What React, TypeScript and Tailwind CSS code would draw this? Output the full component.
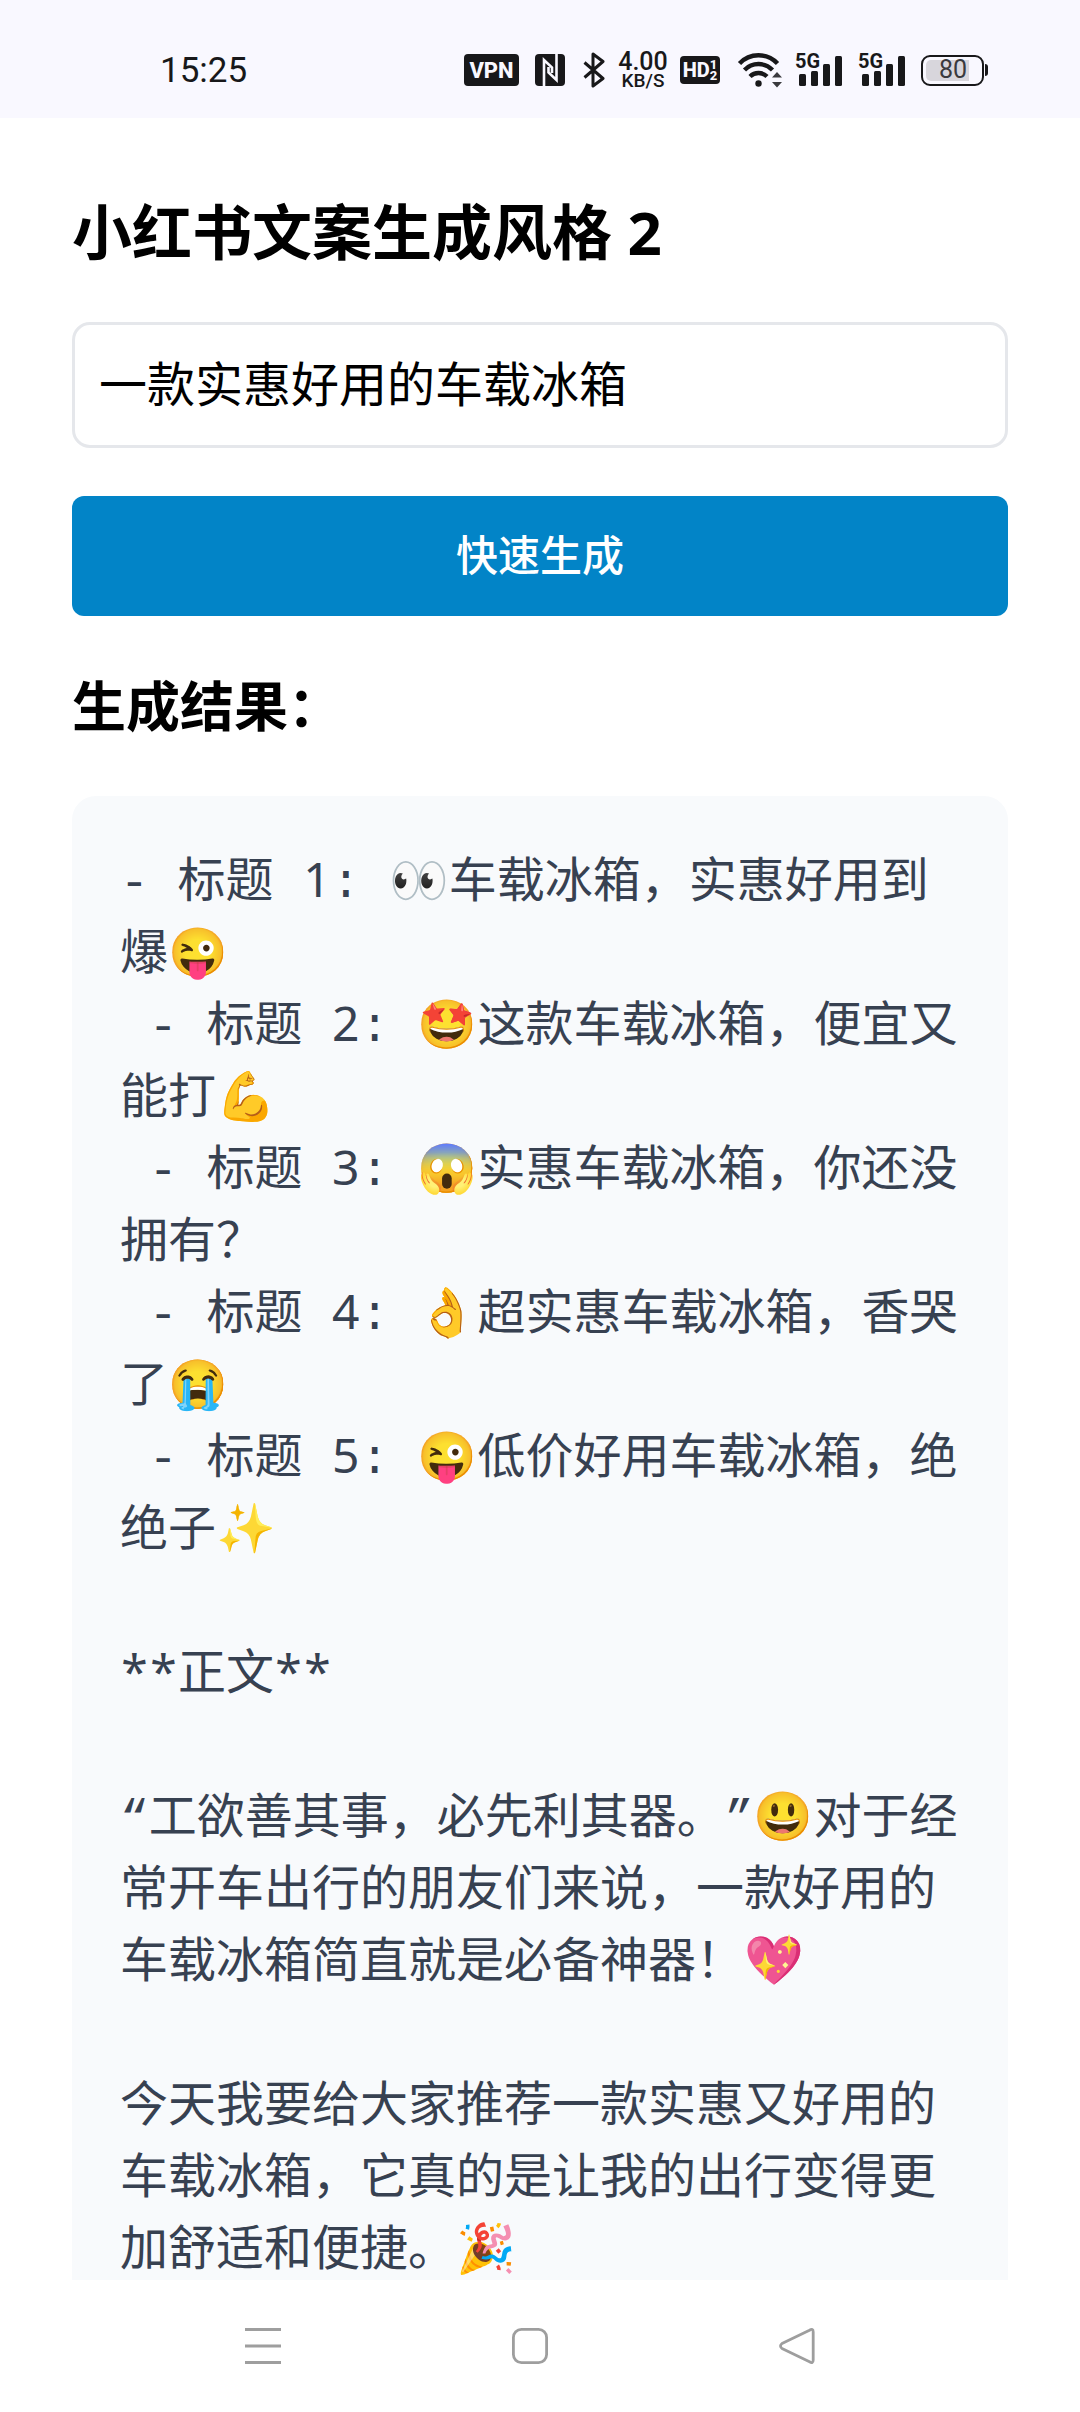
import { useState } from "react";
import type { ReactNode } from "react";

const titles = [
  "👀车载冰箱，实惠好用到爆😜",
  "🤩这款车载冰箱，便宜又能打💪",
  "😱实惠车载冰箱，你还没拥有？",
  "👌超实惠车载冰箱，香哭了😭",
  "😜低价好用车载冰箱，绝绝子✨",
];

/* One monospace cell drawn with a humanist sans glyph. */
function Cell({ children }: { children: ReactNode }) {
  return (
    <span className="inline-block w-[29px] text-center font-['Noto_Sans','Open_Sans',sans-serif] leading-none">
      {children}
    </span>
  );
}

function VpnBadge() {
  return (
    <span className="flex h-8 w-[55px] items-center justify-center rounded bg-[#18181a] font-['Roboto',sans-serif] text-[22px] font-extrabold text-[#f9f8ff]">
      VPN
    </span>
  );
}

function NfcIcon() {
  return (
    <svg className="h-8 w-[30px]" viewBox="0 0 30 32" aria-label="NFC">
      <rect width="30" height="32" rx="4" fill="#18181a" />
      <path d="M9 32V6L17 13.500V19" fill="none" stroke="#f9f8ff" strokeWidth="2.600" />
      <path d="M21.500 0V26L13.500 18.500V13" fill="none" stroke="#f9f8ff" strokeWidth="2.600" />
    </svg>
  );
}

function BluetoothIcon() {
  return (
    <svg className="h-9 w-[22px]" viewBox="0 0 22 36" fill="none" stroke="#18181a" strokeWidth="3" strokeLinejoin="round" aria-label="Bluetooth">
      <path d="M1.500 10.500L20 26.500L10 34V2L20 9.500L1.500 25.500" />
    </svg>
  );
}

function NetSpeed() {
  return (
    <span className="flex w-[54px] flex-col items-center font-['Roboto',sans-serif] font-medium text-[#18181a]">
      <span className="text-[25px] leading-[20px]">4.00</span>
      <span className="text-[19px] leading-[17px]">KB/S</span>
    </span>
  );
}

function HdBadge() {
  return (
    <span className="flex h-7 w-10 items-center justify-center rounded bg-[#18181a] font-['Roboto',sans-serif] font-extrabold text-[#f9f8ff]">
      <span className="text-[20px] leading-7">HD</span>
      <span className="flex flex-col text-[13px] leading-[11px]">
        <span>1</span>
        <span>2</span>
      </span>
    </span>
  );
}

function WifiIcon() {
  return (
    <svg className="h-9 w-[46px]" viewBox="0 0 46 36" fill="none" stroke="#18181a" strokeWidth="4.400" aria-label="Wi-Fi">
      <path d="M2.500 11.500A26 26 0 0 1 40.500 11.500" />
      <path d="M7.500 18A19.500 19.500 0 0 1 35.500 18" />
      <path d="M13 24.500A12 12 0 0 1 30 24.500" />
      <circle cx="21.500" cy="31.500" r="3.200" fill="#18181a" stroke="none" />
      <path d="M35 25.500h10l-5-5.500zM35 30h10l-5 5.500z" fill="#3a3a3e" stroke="none" />
    </svg>
  );
}

function SignalIcon() {
  return (
    <span className="relative block h-8 w-[46px]">
      <svg className="h-8 w-[46px]" viewBox="0 0 46 32" fill="#18181a" aria-label="5G signal">
        <rect x="3" y="20" width="7" height="12" rx="1.500" />
        <rect x="15" y="17" width="7" height="15" rx="1.500" />
        <rect x="27" y="10" width="7" height="22" rx="1.500" />
        <rect x="39" y="2" width="7" height="30" rx="1.500" />
      </svg>
      <span className="absolute -top-0.5 -left-px font-['Roboto',sans-serif] text-[20px] leading-[18px] font-bold text-[#18181a]">
        5G
      </span>
    </span>
  );
}

function Battery() {
  return (
    <span className="flex items-center gap-px">
      <span className="flex h-[31px] w-[63px] rounded-[9px] border-2 border-[#18181a] p-[3px]">
        <span className="flex w-[43px] items-center justify-end rounded-l-[5px] bg-[#d8d6dc] pr-0.5 font-['Roboto',sans-serif] text-[25px] text-[#3a3a3e]">
          80
        </span>
      </span>
      <span className="h-3 w-[3px] rounded-r-sm bg-[#18181a]" />
    </span>
  );
}

function StatusBar() {
  return (
    <header className="flex h-[118px] shrink-0 items-center justify-between bg-[#f9f8ff] pt-[22px] pr-[92px] pl-[160px]">
      <time className="pt-0.5 font-['Roboto',sans-serif] text-[35px] text-[#18181a]">15:25</time>
      <div className="flex items-center">
        <VpnBadge />
        <span className="ml-4"><NfcIcon /></span>
        <span className="ml-[18px]"><BluetoothIcon /></span>
        <span className="ml-[11px]"><NetSpeed /></span>
        <span className="ml-2.5"><HdBadge /></span>
        <span className="ml-[17px]"><WifiIcon /></span>
        <span className="ml-[13px]"><SignalIcon /></span>
        <span className="ml-[17px]"><SignalIcon /></span>
        <span className="ml-4"><Battery /></span>
      </div>
    </header>
  );
}

function NavBar() {
  return (
    <nav className="flex h-[132px] shrink-0 items-center justify-center gap-[231px] bg-white pr-5">
      <button type="button" aria-label="菜单">
        <svg className="size-9" viewBox="0 0 36 36" stroke="#9e9e9e" strokeWidth="3" fill="none">
          <path d="M0 1.500h36M0 18h36M0 34.500h36" />
        </svg>
      </button>
      <button type="button" aria-label="主屏幕">
        <svg className="size-9" viewBox="0 0 36 36" stroke="#9e9e9e" strokeWidth="2.800" fill="none">
          <rect x="1.400" y="1.400" width="33.200" height="33.200" rx="8" />
        </svg>
      </button>
      <button type="button" aria-label="返回">
        <svg className="size-9" viewBox="0 0 36 36" stroke="#9e9e9e" strokeWidth="2.800" fill="none" strokeLinejoin="round">
          <path d="M30.500 2.200Q34.200 0 34.200 4V32Q34.200 36 30.500 33.800L3 20.500Q0 18 3 15.500Z" />
        </svg>
      </button>
    </nav>
  );
}

export default function App() {
  const [topic, setTopic] = useState("一款实惠好用的车载冰箱");

  return (
    <div className="flex h-screen flex-col bg-white font-['Noto_Sans','Noto_Sans_CJK_SC',sans-serif]" lang="zh-CN">
      <StatusBar />
      <main className="flex flex-1 flex-col gap-12 overflow-y-auto px-[72px] pt-[72px] text-black [scrollbar-width:none]">
        <h1 className="text-[60px] leading-[84px] font-bold">小红书文案生成风格 2</h1>
        <input
          type="text"
          aria-label="文案主题"
          value={topic}
          onChange={(event) => setTopic(event.target.value)}
          className="h-[126px] w-full shrink-0 rounded-[18px] border-[3px] border-[#e5e7eb] bg-white px-6 pb-2 text-5xl outline-none"
        />
        <button type="button" className="h-[120px] w-full shrink-0 rounded-xl bg-[#0284c7] pb-1 text-[42px] font-medium text-white">
          快速生成
        </button>
        <h2 className="text-[54px] leading-[84px] font-bold">生成结果：</h2>
        <div className="shrink-0 rounded-3xl bg-[#f8fafc] px-12 pt-[52px] pb-12 font-['Liberation_Mono','Noto_Sans_CJK_SC','Noto_Color_Emoji',monospace] text-5xl leading-[72px] break-words whitespace-pre-wrap text-[#374151] [text-spacing-trim:space-all]">
          {titles.map((title, index) => (
            <p key={title}>
              {index > 0 ? " - 标题 " : "- 标题 "}
              <Cell>{index + 1}</Cell>
              {`: ${title}`}
            </p>
          ))}
          <p className="mt-[72px]">
            <Cell>*</Cell>
            <Cell>*</Cell>
            正文
            <Cell>*</Cell>
            <Cell>*</Cell>
          </p>
          <p className="mt-[72px]">
            “工欲善其事，必先利其器。”😃对于经常开车出行的朋友们来说，一款好用的车载冰箱简直就是必备神器！💖
          </p>
          <p className="mt-[72px]">
            今天我要给大家推荐一款实惠又好用的车载冰箱，它真的是让我的出行变得更加舒适和便捷。🎉
          </p>
        </div>
      </main>
      <NavBar />
    </div>
  );
}
